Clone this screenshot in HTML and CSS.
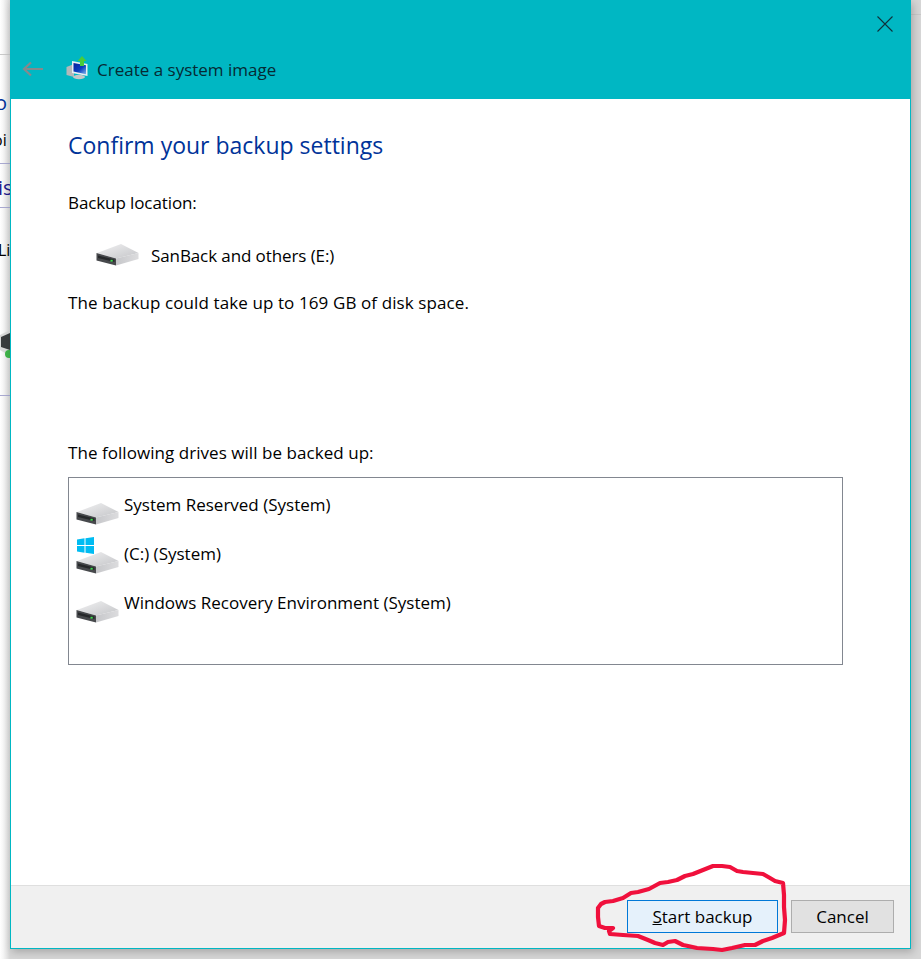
FILE: index.html
```html
<!DOCTYPE html>
<html lang="en">
<head>
<meta charset="utf-8">
<title>Create a system image</title>
<link rel="stylesheet" href="styles.css">
</head>
<body>
<svg class="defs" width="0" height="0" aria-hidden="true">
  <defs>
    <linearGradient id="topFace" x1="0" y1="0" x2="1" y2="1">
      <stop offset="0" stop-color="#f2f2f3"/>
      <stop offset="1" stop-color="#c4c5c8"/>
    </linearGradient>
    <linearGradient id="sideFace" x1="0" y1="0" x2="1" y2="0">
      <stop offset="0" stop-color="#c6c7ca"/>
      <stop offset="1" stop-color="#dcdcde"/>
    </linearGradient>
    <linearGradient id="screen" x1="0" y1="0" x2="1" y2="1">
      <stop offset="0" stop-color="#0a1f9c"/>
      <stop offset=".55" stop-color="#0b3fc0"/>
      <stop offset="1" stop-color="#7fb6ea"/>
    </linearGradient>
    <symbol id="drive" viewBox="0 0 43 22">
      <polygon points="1,9 25,0 42.5,9 20,14.5" fill="url(#topFace)"/>
      <polygon points="0.5,9 20,14.5 20,21.5 0.5,16.5" fill="#47494c"/>
      <polygon points="2,11.5 18.500,15.500 18.500,18 2,14" fill="#26282a"/>
      <polygon points="20,14.500 42.500,9 42.500,15 20,21.500" fill="url(#sideFace)"/>
      <rect x="14.500" y="15.800" width="2.200" height="1.800" fill="#3ddc4e"/>
    </symbol>
  </defs>
</svg>

<div class="behind">
  <span class="frag frag-a">o</span>
  <span class="frag frag-b">oi</span>
  <span class="frag frag-c">is</span>
  <span class="frag frag-d">Li</span>
  <span class="rule rule-a"></span>
  <span class="rule rule-b"></span>
  <span class="rule rule-c"></span>
  <span class="rule rule-d"></span>
  <span class="rule rule-e"></span>
  <svg class="frag-icon" width="10" height="30" viewBox="0 0 10 30">
    <polygon points="10,0 0,5 0,20 10,26" fill="#d9d9d9"/>
    <polygon points="10,3 1,7 1,17 10,20" fill="#3a3c3e"/>
    <circle cx="9" cy="24" r="4" fill="#3fb54a"/>
  </svg>
</div>

<main class="window">
  <header class="titlebar">
    <button class="close" aria-label="Close">
      <svg width="16" height="16" viewBox="0 0 16 16"><path d="M0.500 0.500 15.500 15.500M15.500 0.500 0.500 15.500" stroke="#10313a" stroke-width="1.100" fill="none"/></svg>
    </button>
    <div class="titleline">
      <svg class="back" width="22" height="16" viewBox="0 0 22 16"><path d="M9 1.500 2 8l7 6.500M2 8h19" stroke="#86898c" stroke-width="2.200" fill="none"/></svg>
      <svg class="appicon" width="22" height="24" viewBox="0 0 22 24">
        <path d="M0.500 11 8 8v13l-7.500-2z" fill="#b4b8b9"/>
        <path d="M6 5 21.500 8v12L6 17z" fill="#e8eef2"/>
        <path d="M7.500 7 20 9.300v9L7.500 15.500z" fill="url(#screen)"/>
        <ellipse cx="13" cy="21" rx="6" ry="2.200" fill="#c4c8c8"/>
        <path d="M16 0 20.500 5H18v5h-4V5h-2.500z" fill="#48cc3a"/>
      </svg>
      <span class="titletext">Create a system image</span>
    </div>
  </header>

  <section class="content">
    <h1 class="heading">Confirm your backup settings</h1>
    <p class="label">Backup location:</p>
    <div class="location">
      <svg class="drive" width="43" height="22"><use href="#drive"/></svg>
      <span>SanBack and others (E:)</span>
    </div>
    <p class="space">The backup could take up to 169 GB of disk space.</p>
    <p class="drives-label">The following drives will be backed up:</p>
    <ul class="drives">
      <li class="drive-row">
        <svg class="drive" width="43" height="22"><use href="#drive"/></svg>
        <span>System Reserved (System)</span>
      </li>
      <li class="drive-row">
        <svg class="drive" width="43" height="22"><use href="#drive"/></svg>
        <svg class="winlogo" width="17" height="17" viewBox="0 0 17 17"><path d="M0 2.500 7.500 1.300V8H0zM8.500 1.200 17 0v8H8.500zM0 9h7.500v6.700L0 14.500zM8.500 9H17v8l-8.500-1.200z" fill="#00bcf2"/></svg>
        <span>(C:) (System)</span>
      </li>
      <li class="drive-row">
        <svg class="drive" width="43" height="22"><use href="#drive"/></svg>
        <span>Windows Recovery Environment (System)</span>
      </li>
    </ul>
  </section>

  <footer class="actions">
    <button class="btn btn-primary"><u>S</u>tart backup</button>
    <button class="btn">Cancel</button>
  </footer>
</main>

<svg class="scribble" width="921" height="959" viewBox="0 0 921 959" aria-hidden="true">
  <path d="M599 926 598 917 598 908 601 904 605 902 613 901 623 898 631 893 638 892 649 889 660 883 668 882 677 880 685 876 693 874 703 870 713 866 722 866 730 867 737 871 743 872 753 873 763 874 770 878 775 881 783 883 784 895 784 907 785 920 784 933 772 938 763 941 755 945 745 945 732 948 722 950 713 949 697 948 688 946 683 945 675 941 668 942 663 945 655 943 648 940 638 936 623 935 610 934 609 931 613 928 605 928Z" fill="none" stroke="#f0103c" stroke-width="4.200" stroke-linejoin="round"/>
</svg>
</body>
</html>
```
FILE: styles.css
```css
* { box-sizing: border-box; }

html, body {
  margin: 0;
  padding: 0;
  height: 100%;
}

body {
  position: relative;
  width: 921px;
  height: 959px;
  overflow: hidden;
  background: #fff;
  font-family: "Open Sans", "Noto Sans", sans-serif;
  font-size: 17px;
  color: #000;
}

.defs { position: absolute; }

/* Window lying behind the dialog */
.behind {
  position: absolute;
  inset: 0;
  background: linear-gradient(to right, #fff 0, #f6f6f6 3px, #d6d6d6 10px);
}

.frag { position: absolute; left: -2px; font-size: 20px; line-height: 24px; }
.frag-a { top: 91px; color: #003399; left: -5px; }
.frag-b { top: 128px; font-size: 16px; left: -7px; }
.frag-c { top: 176px; color: #1e1a8c; }
.frag-d { top: 238px; font-size: 16px; }

.rule { position: absolute; left: 0; width: 10px; height: 1px; background: #a9a9d0; }
.rule-a { top: 54px; background: #c8c8c8; }
.rule-b { top: 163px; }
.rule-c { top: 207px; }
.rule-d { top: 395px; }
.rule-e { left: 911px; top: 14px; background: #c8c8c8; }
.frag-icon { position: absolute; left: 0; top: 330px; }

/* Dialog */
.window {
  position: absolute;
  left: 10px;
  top: 0;
  width: 901px;
  height: 949px;
  display: flex;
  flex-direction: column;
  background: #fff;
  border: 1px solid #00b7c3;
  box-shadow: 2px 3px 8px rgba(0, 0, 0, .22);
}

.titlebar {
  flex: 0 0 98px;
  display: flex;
  flex-direction: column;
  background: #00b7c3;
}

.close {
  align-self: flex-end;
  width: 16px;
  height: 16px;
  margin: 15px 17px 0 0;
  padding: 0;
  border: 0;
  background: none;
  display: flex;
}

.titleline {
  display: flex;
  align-items: center;
  margin-top: 24px;
  height: 26px;
  padding-left: 11px;
}

.back { margin-right: 22px; }
.appicon { margin-right: 9px; margin-top: -2px; }
.titletext { color: #062a33; }

.content {
  flex: 1;
  display: flex;
  flex-direction: column;
  padding: 29px 67px 0 57px;
}

.heading {
  margin: 0;
  font-size: 23px;
  line-height: 34px;
  font-weight: 400;
  color: #003399;
}

.label, .space, .drives-label { margin: 0; line-height: 22px; }
.label { margin-top: 30px; letter-spacing: -.1px; }

.location {
  display: flex;
  align-items: center;
  height: 32px;
  margin-top: 25px;
  padding-left: 28px;
  gap: 12px;
  letter-spacing: -.1px;
}

.space { margin-top: 21px; letter-spacing: .1px; }
.drives-label { margin-top: 128px; letter-spacing: .05px; }

.drives {
  list-style: none;
  margin: 13px 0 0;
  padding: 3px 0 0 7px;
  height: 188px;
  border: 1px solid #828790;
}

.drive-row {
  position: relative;
  display: flex;
  align-items: flex-start;
  height: 49px;
  padding-top: 13px;
  gap: 4px;
  line-height: 22px;
}

.drive-row .drive { margin-top: 9px; flex: none; }
.drive-row span { margin-left: 1px; }
.winlogo { position: absolute; left: 1px; top: 7px; }

.actions {
  flex: 0 0 63px;
  display: flex;
  align-items: flex-start;
  justify-content: flex-end;
  gap: 13px;
  padding: 14px 16px 0 0;
  background: #f0f0f0;
  border-top: 1px solid #dfdfdf;
}

.btn {
  width: 103px;
  height: 33px;
  padding: 0;
  font: inherit;
  color: #000;
  background: #e1e1e1;
  border: 1px solid #adadad;
  border-radius: 0;
}

.btn-primary {
  width: 151px;
  background: #e5f1fb;
  border-color: #0078d7;
}

.scribble { position: absolute; left: 0; top: 0; pointer-events: none; }
```
